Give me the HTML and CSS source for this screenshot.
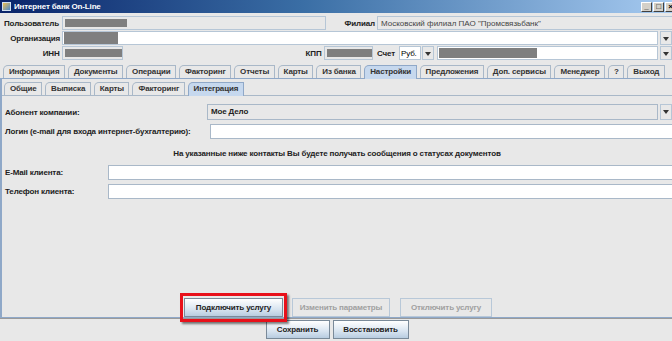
FILE: index.html
```html
<!DOCTYPE html>
<html lang="ru">
<head>
    <meta charset="UTF-8">
    <title>Интернет банк On-Line</title>
    <link rel="stylesheet" href="styles.css">
</head>
<body>
<div class="window">
    <div class="titlebar">
        <span class="app-icon"></span>
        <span class="title">Интернет банк On-Line</span>
        <div class="win-btns">
            <span class="wbtn">_</span><span class="wbtn">□</span><span class="wbtn">×</span>
        </div>
    </div>

    <div class="header">
        <div class="row">
            <label class="lbl lbl-first">Пользователь</label>
            <div class="field user-field"><span class="mask m-user"></span></div>
            <label class="lbl lbl-branch">Филиал</label>
            <div class="field branch-field">Московский филиал ПАО "Промсвязьбанк"</div>
        </div>
        <div class="row">
            <label class="lbl">Организация</label>
            <div class="field org-field"><span class="mask m-org"></span></div>
            <span class="arrow-btn"></span>
        </div>
        <div class="row">
            <label class="lbl">ИНН</label>
            <div class="field inn-field"><span class="mask m-inn"></span></div>
            <label class="lbl lbl-kpp">КПП</label>
            <div class="field kpp-field"><span class="mask m-kpp"></span></div>
            <label class="lbl lbl-acc">Счет</label>
            <div class="field cur-field">Руб.</div>
            <span class="arrow-btn small"></span>
            <div class="field acc-field"><span class="mask m-acc"></span></div>
            <span class="arrow-btn"></span>
        </div>
    </div>

    <div class="tabs main-tabs">
        <span class="tab">Информация</span>
        <span class="tab">Документы</span>
        <span class="tab">Операции</span>
        <span class="tab">Факторинг</span>
        <span class="tab">Отчеты</span>
        <span class="tab">Карты</span>
        <span class="tab">Из банка</span>
        <span class="tab active">Настройки</span>
        <span class="tab">Предложения</span>
        <span class="tab">Доп. сервисы</span>
        <span class="tab">Менеджер</span>
        <span class="tab">?</span>
        <span class="tab">Выход</span>
    </div>

    <div class="tab-body">
        <div class="tabs sub-tabs">
            <span class="tab">Общие</span>
            <span class="tab">Выписка</span>
            <span class="tab">Карты</span>
            <span class="tab">Факторинг</span>
            <span class="tab active">Интеграция</span>
        </div>

        <div class="panel">
            <div class="frow">
                <label class="flbl w-abon">Абонент компании:</label>
                <div class="combo">Мое Дело</div>
                <span class="arrow-btn tall"></span>
            </div>
            <div class="frow">
                <label class="flbl w-login">Логин (e-mail для входа интернет-бухгалтерию):</label>
                <div class="input"></div>
            </div>
            <p class="notice">На указанные ниже контакты Вы будете получать сообщения о статусах документов</p>
            <div class="frow">
                <label class="flbl w-contact">E-Mail клиента:</label>
                <div class="input"></div>
            </div>
            <div class="frow">
                <label class="flbl w-contact">Телефон клиента:</label>
                <div class="input"></div>
            </div>

            <div class="actions">
                <div class="highlight">
                    <button class="btn btn-connect">Подключить услугу</button>
                    <span class="red-box"></span>
                </div>
                <button class="btn btn-change" disabled>Изменить параметры</button>
                <button class="btn btn-off" disabled>Отключить услугу</button>
            </div>
        </div>
    </div>

    <div class="footer">
        <button class="btn btn-save">Сохранить</button>
        <button class="btn btn-restore">Восстановить</button>
    </div>
</div>
</body>
</html>
```

FILE: styles.css
```css
body {
    margin: 0;
    background-color: #fff;
    font-family: "Liberation Sans", Arial, sans-serif;
    font-size: 8px;
    letter-spacing: -0.15px;
    color: #222;
}
.window {
    width: 672px;
    height: 341px;
    overflow: hidden;
    background-color: #e8e8e8;
    display: flex;
    flex-direction: column;
}

/* title bar */
.titlebar {
    height: 13px;
    display: flex;
    align-items: center;
    background: linear-gradient(to right, #0a246a 0%, #3a6ea5 45%, #a6caf0 100%);
    color: #fff;
    font-weight: bold;
    padding-left: 2px;
}
.app-icon {
    width: 9px;
    height: 9px;
    margin-right: 3px;
    background: linear-gradient(135deg, #f0c050, #4a8ad0);
    border: 1px solid #d0e0f0;
    box-sizing: border-box;
}
.win-btns {
    margin-left: auto;
    display: flex;
    gap: 1px;
    margin-right: -4px;
}
.wbtn {
    width: 11px;
    height: 10px;
    background: #d4d0c8;
    border: 1px solid;
    border-color: #fff #404040 #404040 #fff;
    box-sizing: border-box;
    color: #000;
    font-size: 8px;
    line-height: 8px;
    text-align: center;
    overflow: hidden;
}

/* header fields */
.header {
    padding-top: 3px;
    display: flex;
    flex-direction: column;
    gap: 1px;
}
.row {
    display: flex;
    align-items: center;
    height: 14px;
}
.lbl {
    width: 60px;
    text-align: right;
    font-weight: bold;
    padding-right: 2px;
    white-space: nowrap;
}
.lbl-first {
    text-align: left;
    padding-left: 4px;
    width: 56px;
}
.field {
    height: 14px;
    box-sizing: border-box;
    border: 1px solid #b6c6d6;
    background: #e8e8e8;
    display: flex;
    align-items: center;
    padding-left: 2px;
    white-space: nowrap;
}
.mask {
    display: block;
    height: 8px;
    background: #7f7f7f;
}
.user-field { width: 264px; }
.m-user { width: 62px; }
.lbl-branch { width: 49px; }
.branch-field {
    flex: 1;
    color: #444;
    border-right: none;
    padding-left: 3px;
    letter-spacing: 0;
}
.org-field {
    width: 596px;
    background: #fff;
    padding-left: 1px;
}
.m-org { width: 54px; height: 12px; }
.inn-field { width: 62px; }
.m-inn { width: 57px; }
.lbl-kpp { width: 200px; }
.kpp-field { width: 50px; }
.m-kpp { width: 45px; }
.lbl-acc { width: 22px; }
.cur-field {
    width: 22px;
    background: #fff;
    color: #000;
    padding-left: 1px;
    margin-left: 2px;
}
.acc-field {
    width: 223px;
    background: #fff;
    margin-left: 3px;
    padding: 1px;
    align-items: stretch;
}
.m-acc { width: 98px; height: auto; }
.arrow-btn {
    width: 12px;
    height: 14px;
    margin-left: 2px;
    box-sizing: border-box;
    border: 1px solid #b6c6d6;
    background: #e8e8e8;
    position: relative;
}
.arrow-btn::after {
    content: "";
    position: absolute;
    left: 2px;
    top: 5px;
    border-left: 3px solid transparent;
    border-right: 3px solid transparent;
    border-top: 4px solid #333;
}
.arrow-btn.small { margin-left: 1px; }
.arrow-btn.tall { height: 16px; }

/* tabs */
.tabs {
    display: flex;
    align-items: flex-end;
    gap: 3px;
    padding-left: 3px;
}
.main-tabs {
    margin-top: 4px;
    height: 14px;
    border-bottom: 1px solid #8fa8c8;
}
.tab {
    height: 13px;
    box-sizing: border-box;
    border: 1px solid #a9b8c8;
    border-bottom: none;
    border-top-left-radius: 5px;
    padding: 0 4.5px 0 5px;
    font-weight: bold;
    line-height: 12px;
    color: #333;
    background: #e8e8e8;
    white-space: nowrap;
}
.tab.active {
    background: #c6d8ee;
    border-color: #8fa8c8;
    height: 14px;
    margin-bottom: -1px;
}
.tab-body {
    flex: 1;
    display: flex;
    flex-direction: column;
    border-left: 2px solid #8fa8c8;
    border-bottom: 1px solid #8fa8c8;
    box-shadow: 0 1px 0 #9a9a9a;
    margin-bottom: 2px;
}
.sub-tabs {
    margin-top: 2px;
    height: 14px;
    padding-left: 2px;
    border-bottom: 1px solid #a9b8c8;
}

/* panel */
.panel {
    flex: 1;
    display: flex;
    flex-direction: column;
    padding-top: 8px;
}
.frow {
    display: flex;
    align-items: center;
    margin-bottom: 4px;
}
.flbl {
    font-weight: bold;
    padding-left: 3px;
    white-space: nowrap;
}
.w-abon { width: 202px; }
.w-login { width: 205px; }
.w-contact { width: 103px; }
.combo {
    flex: 1;
    height: 16px;
    box-sizing: border-box;
    border: 1px solid #a9b8c8;
    background: #e8e8e8;
    font-weight: bold;
    padding-left: 3px;
    line-height: 14px;
}
.input {
    flex: 1;
    height: 15px;
    box-sizing: border-box;
    border: 1px solid #a9b8c8;
    border-right: none;
    background: #fff;
}
.notice {
    margin: 6px 0 7px;
    text-align: center;
    font-weight: bold;
}

/* buttons */
.actions {
    margin-top: auto;
    display: flex;
    gap: 9px;
    padding-left: 182px;
    height: 19px;
}
.btn {
    height: 19px;
    padding: 0;
    font-family: "Liberation Sans", Arial, sans-serif;
    font-size: 8px;
    letter-spacing: -0.15px;
    font-weight: bold;
    color: #222;
    border: 1px solid #7a8a99;
    background: linear-gradient(#ffffff, #d8e4f0 60%, #b8cce0);
    border-radius: 0;
}
.btn:disabled {
    color: #a0a0a0;
    background: #e8e8e8;
    border-color: #b8c8d8;
}
.btn-connect { width: 99px; }
.btn-change { width: 98px; }
.btn-off { width: 92px; margin-left: 1px; }
.btn-save { width: 64px; }
.btn-restore { width: 76px; }
.highlight {
    position: relative;
    display: flex;
}
.red-box {
    position: absolute;
    left: -4px;
    top: -5px;
    right: -4px;
    bottom: -5px;
    border: 3px solid #e8101a;
    box-shadow: 2px 2px 2px rgba(0, 0, 0, 0.5);
}
.footer {
    height: 20px;
    display: flex;
    justify-content: center;
    gap: 3px;
    padding-left: 2px;
    padding-bottom: 1px;
}
```
